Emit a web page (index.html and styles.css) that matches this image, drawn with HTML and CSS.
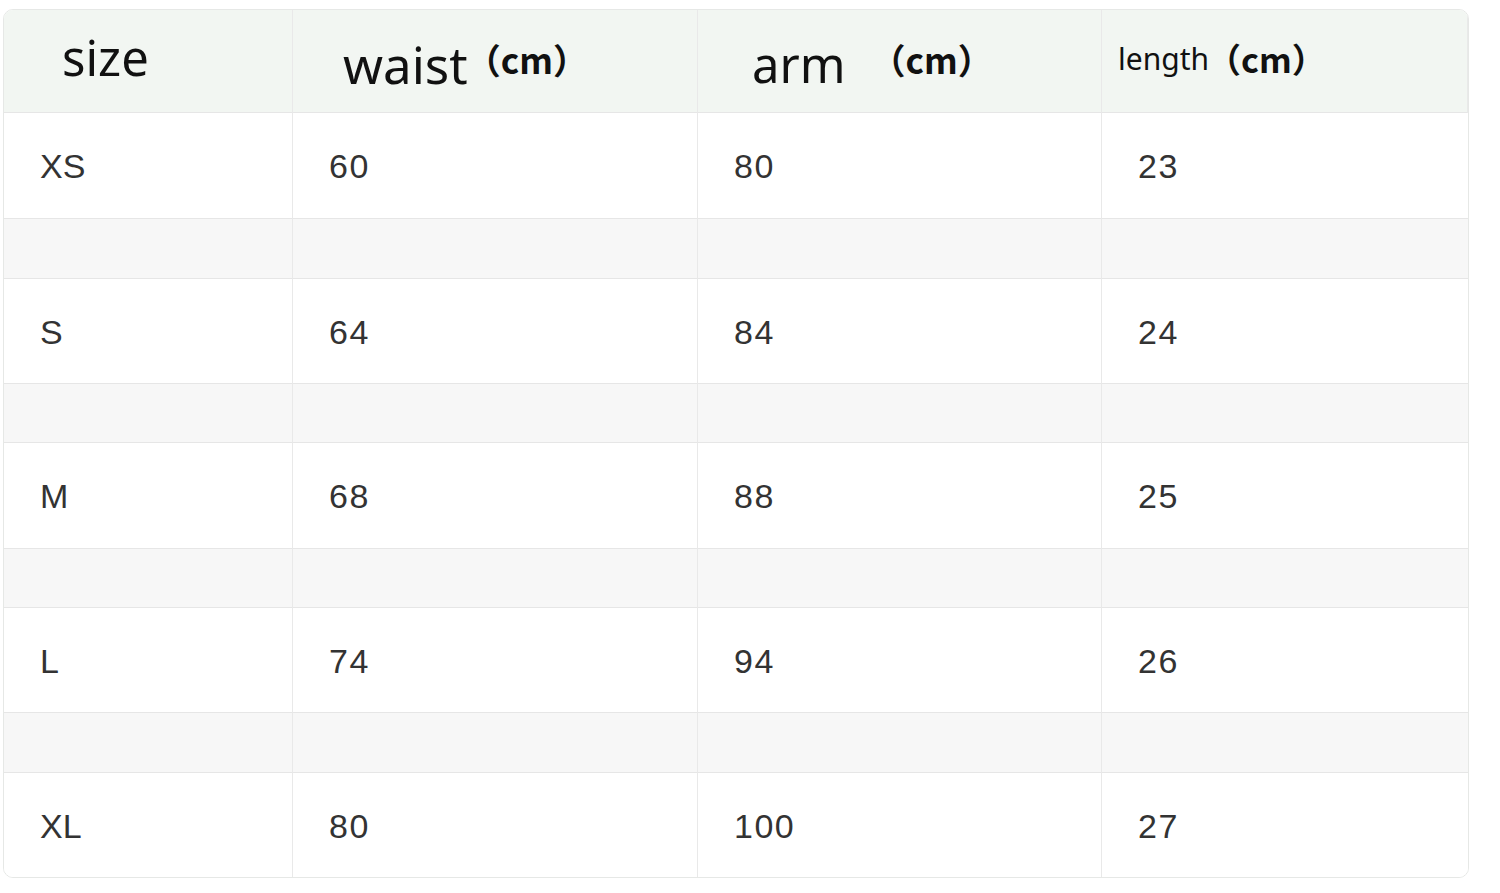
FILE: index.html
```html
<!DOCTYPE html>
<html>
<head>
<meta charset="utf-8">
<link rel="stylesheet" href="styles.css">
</head>
<body>
<div class="chart">
  <div class="cell head c1"><span class="big">size</span></div>
  <div class="cell head c2"><span class="big">waist</span><span class="unit">（cm）</span></div>
  <div class="cell head c3"><span class="big">arm</span><span class="unit gap">（cm）</span></div>
  <div class="cell head c4"><span class="mid">length</span><span class="unit">（cm）</span></div>

  <div class="cell data r1">XS</div><div class="cell data num r1">60</div><div class="cell data num r1">80</div><div class="cell data num r1 last">23</div>
  <div class="cell sp g1"></div><div class="cell sp g1"></div><div class="cell sp g1"></div><div class="cell sp g1 last"></div>
  <div class="cell data r2">S</div><div class="cell data num r2">64</div><div class="cell data num r2">84</div><div class="cell data num r2 last">24</div>
  <div class="cell sp g2"></div><div class="cell sp g2"></div><div class="cell sp g2"></div><div class="cell sp g2 last"></div>
  <div class="cell data r1">M</div><div class="cell data num r1">68</div><div class="cell data num r1">88</div><div class="cell data num r1 last">25</div>
  <div class="cell sp g2"></div><div class="cell sp g2"></div><div class="cell sp g2"></div><div class="cell sp g2 last"></div>
  <div class="cell data r2">L</div><div class="cell data num r2">74</div><div class="cell data num r2">94</div><div class="cell data num r2 last">26</div>
  <div class="cell sp g1"></div><div class="cell sp g1"></div><div class="cell sp g1"></div><div class="cell sp g1 last"></div>
  <div class="cell data r2 bottom">XL</div><div class="cell data num r2 bottom">80</div><div class="cell data num r2 bottom">100</div><div class="cell data num r2 bottom last">27</div>
</div>
</body>
</html>
```
FILE: styles.css
```css
html, body {
  margin: 0;
  padding: 0;
  background: #ffffff;
}
.chart {
  margin: 9px 0 0 3px;
  width: 1466px;
  box-sizing: border-box;
  border: 1px solid #e6e8e6;
  border-radius: 10px;
  overflow: hidden;
  display: grid;
  grid-template-columns: 289px 405px 404px 366px;
  grid-template-rows: 103px 106px 60px 105px 59px 106px 59px 105px 60px 104px;
  font-family: "Liberation Sans", Arial, sans-serif;
}
.cell {
  box-sizing: border-box;
  border-right: 1px solid #e9e9e9;
  border-bottom: 1px solid #e6e6e6;
  display: flex;
  align-items: center;
}
.cell.last { border-right: none; }
.cell.bottom { border-bottom: none; }
.head {
  background: #f2f6f2;
  color: #111;
  font-family: "Noto Sans", "Noto Sans CJK SC", sans-serif;
  align-items: flex-start;
}
.head.c1 { padding: 14px 0 0 58px; }
.head.c2 { padding: 21px 0 0 50px; }
.head.c3 { padding: 21px 0 0 54px; }
.head.c4 { padding: 24px 0 0 16px; }
.big {
  font-size: 49px;
  line-height: 66px;
}
.head.c2 .big { font-size: 51px; }
.head.c3 .big { font-size: 49px; }
.mid {
  font-size: 30px;
  line-height: 50px;
}
.unit {
  font-family: "Noto Sans CJK SC", "Noto Sans", sans-serif;
  font-weight: 700;
  font-size: 35px;
  line-height: 50px;
  margin-top: 3px;
  margin-left: -2px;
}
.head.c4 .unit { margin-top: 0; font-size: 34px; }
.unit.gap { margin-left: 25px; }
.data {
  background: #ffffff;
  color: #333;
  font-size: 34px;
  padding-left: 36px;
  padding-top: 2px;
}
.data.num { letter-spacing: 1.5px; }
.sp {
  background: #f7f7f7;
}
```
